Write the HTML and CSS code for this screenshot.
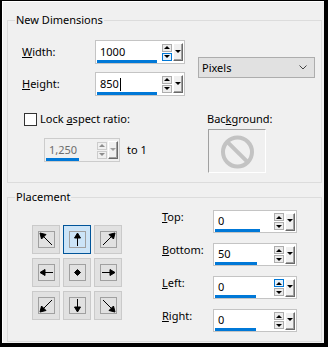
FILE: index.html
```html
<!DOCTYPE html>
<html lang="en">
<head>
    <meta charset="UTF-8">
    <meta name="viewport" content="width=device-width, initial-scale=1.0">
    <title>Canvas Size</title>
    <link rel="stylesheet" href="styles.css">
</head>
<body>
    <div class="dialog">
      <fieldset class="group dims">
        <legend>New Dimensions</legend>
        <div class="dims-body">
          <div class="left-col">
            <div class="row">
              <label class="lbl"><u>W</u>idth:</label>
              <div class="spin wide">
                <div class="field"><span class="val">1000</span><span class="bar" style="width:60px"></span></div>
                <div class="arrows"><i class="up"></i><i class="dn hot"></i></div>
                <div class="drop"><i></i></div>
              </div>
            </div>
            <div class="row">
              <label class="lbl"><u>H</u>eight:</label>
              <div class="spin wide">
                <div class="field"><span class="val">850<span class="caret"></span></span><span class="bar" style="width:60px"></span></div>
                <div class="arrows"><i class="up"></i><i class="dn"></i></div>
                <div class="drop"><i></i></div>
              </div>
            </div>
            <div class="lock">
              <span class="check"></span>
              <span>Lock <u>a</u>spect ratio:</span>
            </div>
            <div class="ratio">
              <div class="spin small disabled">
                <div class="field"><span class="val">1,250</span><span class="bar" style="width:33px"></span></div>
                <div class="arrows"><i class="up"></i><i class="dn"></i></div>
                <div class="drop"><i></i></div>
              </div>
              <span class="to">to 1</span>
            </div>
          </div>
          <div class="right-col">
            <div class="select">
              <span>Pixels</span>
              <svg width="8" height="5" viewBox="0 0 8 5"><path d="M0.5 0.5 L4 4 L7.5 0.5" fill="none" stroke="#444" stroke-width="1"/></svg>
            </div>
            <div class="bg">
              <div class="bg-label">Bac<u>k</u>ground:</div>
              <div class="bg-box">
                <svg width="56" height="42" viewBox="0 0 56 42">
                  <circle cx="28.5" cy="22" r="14.5" fill="none" stroke="#c3c3c3" stroke-width="4"/>
                  <line x1="18.3" y1="11.8" x2="38.7" y2="32.2" stroke="#c3c3c3" stroke-width="4"/>
                </svg>
              </div>
            </div>
          </div>
        </div>
      </fieldset>

      <fieldset class="group place">
        <legend>Placement</legend>
        <div class="place-body">
          <div class="anchors">
            <div class="anchor"><span class="inner"><svg viewBox="0 0 15 15"><path d="M13 13 L3 3"/><polygon points="1,1 7,2.5 2.5,7"/></svg></span></div>
            <div class="anchor on"><span class="inner"><svg viewBox="0 0 15 15"><path d="M7.5 14 L7.5 4"/><polygon points="7.5,1 4.5,6 10.5,6"/></svg></span></div>
            <div class="anchor"><span class="inner"><svg viewBox="0 0 15 15"><path d="M2 13 L12 3"/><polygon points="14,1 12.5,7 8,2.5"/></svg></span></div>
            <div class="anchor"><span class="inner"><svg viewBox="0 0 15 15"><path d="M14 7.5 L4 7.5"/><polygon points="1,7.5 6,4.5 6,10.5"/></svg></span></div>
            <div class="anchor"><span class="inner"><svg viewBox="0 0 15 15"><polygon points="7.5,4.5 10.5,7.5 7.5,10.5 4.5,7.5"/></svg></span></div>
            <div class="anchor"><span class="inner"><svg viewBox="0 0 15 15"><path d="M1 7.5 L11 7.5"/><polygon points="14,7.5 9,4.5 9,10.5"/></svg></span></div>
            <div class="anchor"><span class="inner"><svg viewBox="0 0 15 15"><path d="M13 2 L3 12"/><polygon points="1,14 2.5,8 7,12.5"/></svg></span></div>
            <div class="anchor"><span class="inner"><svg viewBox="0 0 15 15"><path d="M7.5 1 L7.5 11"/><polygon points="7.5,14 4.5,9 10.5,9"/></svg></span></div>
            <div class="anchor"><span class="inner"><svg viewBox="0 0 15 15"><path d="M2 2 L12 12"/><polygon points="14,14 8,12.5 12.5,8"/></svg></span></div>
          </div>
          <div class="offsets">
            <div class="orow">
              <label class="olbl"><u>T</u>op:</label>
              <div class="spin short">
                <div class="field"><span class="val">0</span><span class="bar" style="width:45px"></span></div>
                <div class="arrows"><i class="up"></i><i class="dn"></i></div>
                <div class="drop"><i></i></div>
              </div>
            </div>
            <div class="orow">
              <label class="olbl"><u>B</u>ottom:</label>
              <div class="spin short">
                <div class="field"><span class="val">50</span><span class="bar" style="width:42px"></span></div>
                <div class="arrows"><i class="up"></i><i class="dn"></i></div>
                <div class="drop"><i></i></div>
              </div>
            </div>
            <div class="orow">
              <label class="olbl"><u>L</u>eft:</label>
              <div class="spin short">
                <div class="field"><span class="val">0</span><span class="bar" style="width:41px"></span></div>
                <div class="arrows"><i class="up hot"></i><i class="dn"></i></div>
                <div class="drop"><i></i></div>
              </div>
            </div>
            <div class="orow">
              <label class="olbl"><u>R</u>ight:</label>
              <div class="spin short">
                <div class="field"><span class="val">0</span><span class="bar" style="width:41px"></span></div>
                <div class="arrows"><i class="up"></i><i class="dn"></i></div>
                <div class="drop"><i></i></div>
              </div>
            </div>
          </div>
        </div>
      </fieldset>
    </div>
</body>
</html>
```

FILE: styles.css
```css
* {
    margin: 0;
    padding: 0;
    box-sizing: border-box;
}
body {
    width: 328px;
    height: 347px;
    background: #000;
    font-family: "Noto Sans", "Open Sans", sans-serif;
    font-size: 11px;
    line-height: 16px;
    color: #000;
}
.dialog {
    width: 328px;
    height: 347px;
    border-style: solid;
    border-color: #000;
    border-width: 1px 4px 4px 2px;
    background: #f0f0f0;
    box-shadow: inset 1px 1px 0 #fff;
    padding: 0 2px 0 5px;
}
.group {
    border: 1px solid #dcdcdc;
    min-width: 0;
}
.group legend {
    margin-left: 7px;
    padding: 0 1px;
    line-height: 16px;
}
.dims {
    margin-top: 11px;
    padding: 12px 6px 9px 0;
}
.dims-body {
    display: flex;
    gap: 13px;
    margin-left: 14px;
}
.left-col {
    width: 163px;
    display: flex;
    flex-direction: column;
}
.row {
    display: flex;
    align-items: center;
    height: 24px;
}
.row + .row {
    margin-top: 8px;
}
.lbl {
    width: 73px;
}
.spin {
    display: flex;
    align-items: center;
    height: 24px;
    background: #fff;
    border: 1px solid #c4c4c4;
    padding-right: 1px;
}
.spin.wide {
    width: 90px;
}
.spin.short {
    width: 84px;
    height: 23px;
}
.spin.small {
    width: 76px;
}
.field {
    flex: 1;
    height: 100%;
    display: flex;
    flex-direction: column;
    padding-top: 3px;
}
.spin.short .field {
    padding-top: 2px;
}
.val {
    padding-left: 4px;
    height: 16px;
    display: flex;
    align-items: center;
}
.caret {
    display: inline-block;
    width: 1px;
    height: 13px;
    background: #000;
    margin-left: 1px;
}
.bar {
    height: 3px;
    background: #0078d7;
    margin-left: 1px;
}
.arrows {
    width: 10px;
    height: 17px;
    display: flex;
    flex-direction: column;
    gap: 1px;
    margin-right: 1px;
}
.arrows i {
    flex: 1;
    border: 1px solid #adadad;
    background: #ececec;
    display: flex;
    align-items: center;
    justify-content: center;
}
.arrows i.hot {
    border-color: #0078d7;
    background: #e5f1fb;
}
.arrows i::after {
    content: "";
    border-left: 3px solid transparent;
    border-right: 3px solid transparent;
}
.arrows .up::after {
    border-bottom: 3px solid #000;
}
.arrows .dn::after {
    border-top: 3px solid #000;
}
.drop {
    width: 10px;
    height: 18px;
    background: #f0f0f0;
    border-style: solid;
    border-width: 1px;
    border-color: #fff #696969 #696969 #fff;
    box-shadow: inset -1px -1px 0 #a0a0a0;
    display: flex;
    align-items: center;
    justify-content: center;
}
.drop i {
    border-left: 3px solid transparent;
    border-right: 3px solid transparent;
    border-top: 3px solid #000;
    margin-bottom: 2px;
}
.disabled {
    background: #f0f0f0;
    border-color: #cccccc;
}
.disabled .val {
    color: #6d6d6d;
}
.disabled .arrows i {
    background: #f0f0f0;
    border-color: #cccccc;
}
.disabled .arrows i::after {
    border-top-color: #8d8d8d;
    border-bottom-color: #8d8d8d;
}
.disabled .drop i {
    border-top-color: #a0a0a0;
}
.lock {
    display: flex;
    align-items: center;
    height: 16px;
    margin-top: 15px;
    gap: 3px;
}
.check {
    width: 13px;
    height: 13px;
    margin-left: 2px;
    border: 1px solid #333;
    background: #fff;
}
.ratio {
    display: flex;
    align-items: center;
    margin-top: 11px;
    margin-left: 22px;
    gap: 7px;
}
.right-col {
    flex: 1;
    display: flex;
    flex-direction: column;
}
.select {
    margin-top: 17px;
    height: 21px;
    background: #e1e1e1;
    border: 1px solid #adadad;
    display: flex;
    align-items: center;
    justify-content: space-between;
    padding: 0 7px 0 3px;
}
.bg {
    margin-top: 33px;
    margin-left: 9px;
}
.bg-box {
    width: 58px;
    height: 44px;
    margin: 2px 0 0 1px;
    border-style: solid;
    border-width: 1px;
    border-color: #a0a0a0 #fff #fff #a0a0a0;
}
.bg-box svg {
    display: block;
}
.place {
    margin-top: 6px;
    height: 153px;
    padding: 4px 6px 0 0;
}
.place-body {
    display: flex;
    gap: 40px;
    margin-left: 24px;
}
.anchors {
    margin-top: 16px;
    display: grid;
    grid-template-columns: repeat(3, 28px);
    grid-template-rows: repeat(3, 29px);
    column-gap: 3px;
    row-gap: 4px;
}
.anchor {
    background: #e1e1e1;
    border: 1px solid #cacaca;
    display: flex;
    align-items: center;
    justify-content: center;
}
.anchor .inner {
    width: 17px;
    height: 17px;
    border: 1px solid #a0a0a0;
    display: block;
}
.anchor svg {
    display: block;
    width: 15px;
    height: 15px;
    fill: #000;
    stroke: #000;
    stroke-width: 1;
}
.anchor.on {
    background: #cce4f7;
    border-color: #005499;
}
.offsets {
    display: flex;
    flex-direction: column;
    gap: 9px;
}
.orow {
    display: flex;
    align-items: flex-start;
}
.olbl {
    width: 51px;
}
.orow .spin {
    margin-top: 1px;
}
```
